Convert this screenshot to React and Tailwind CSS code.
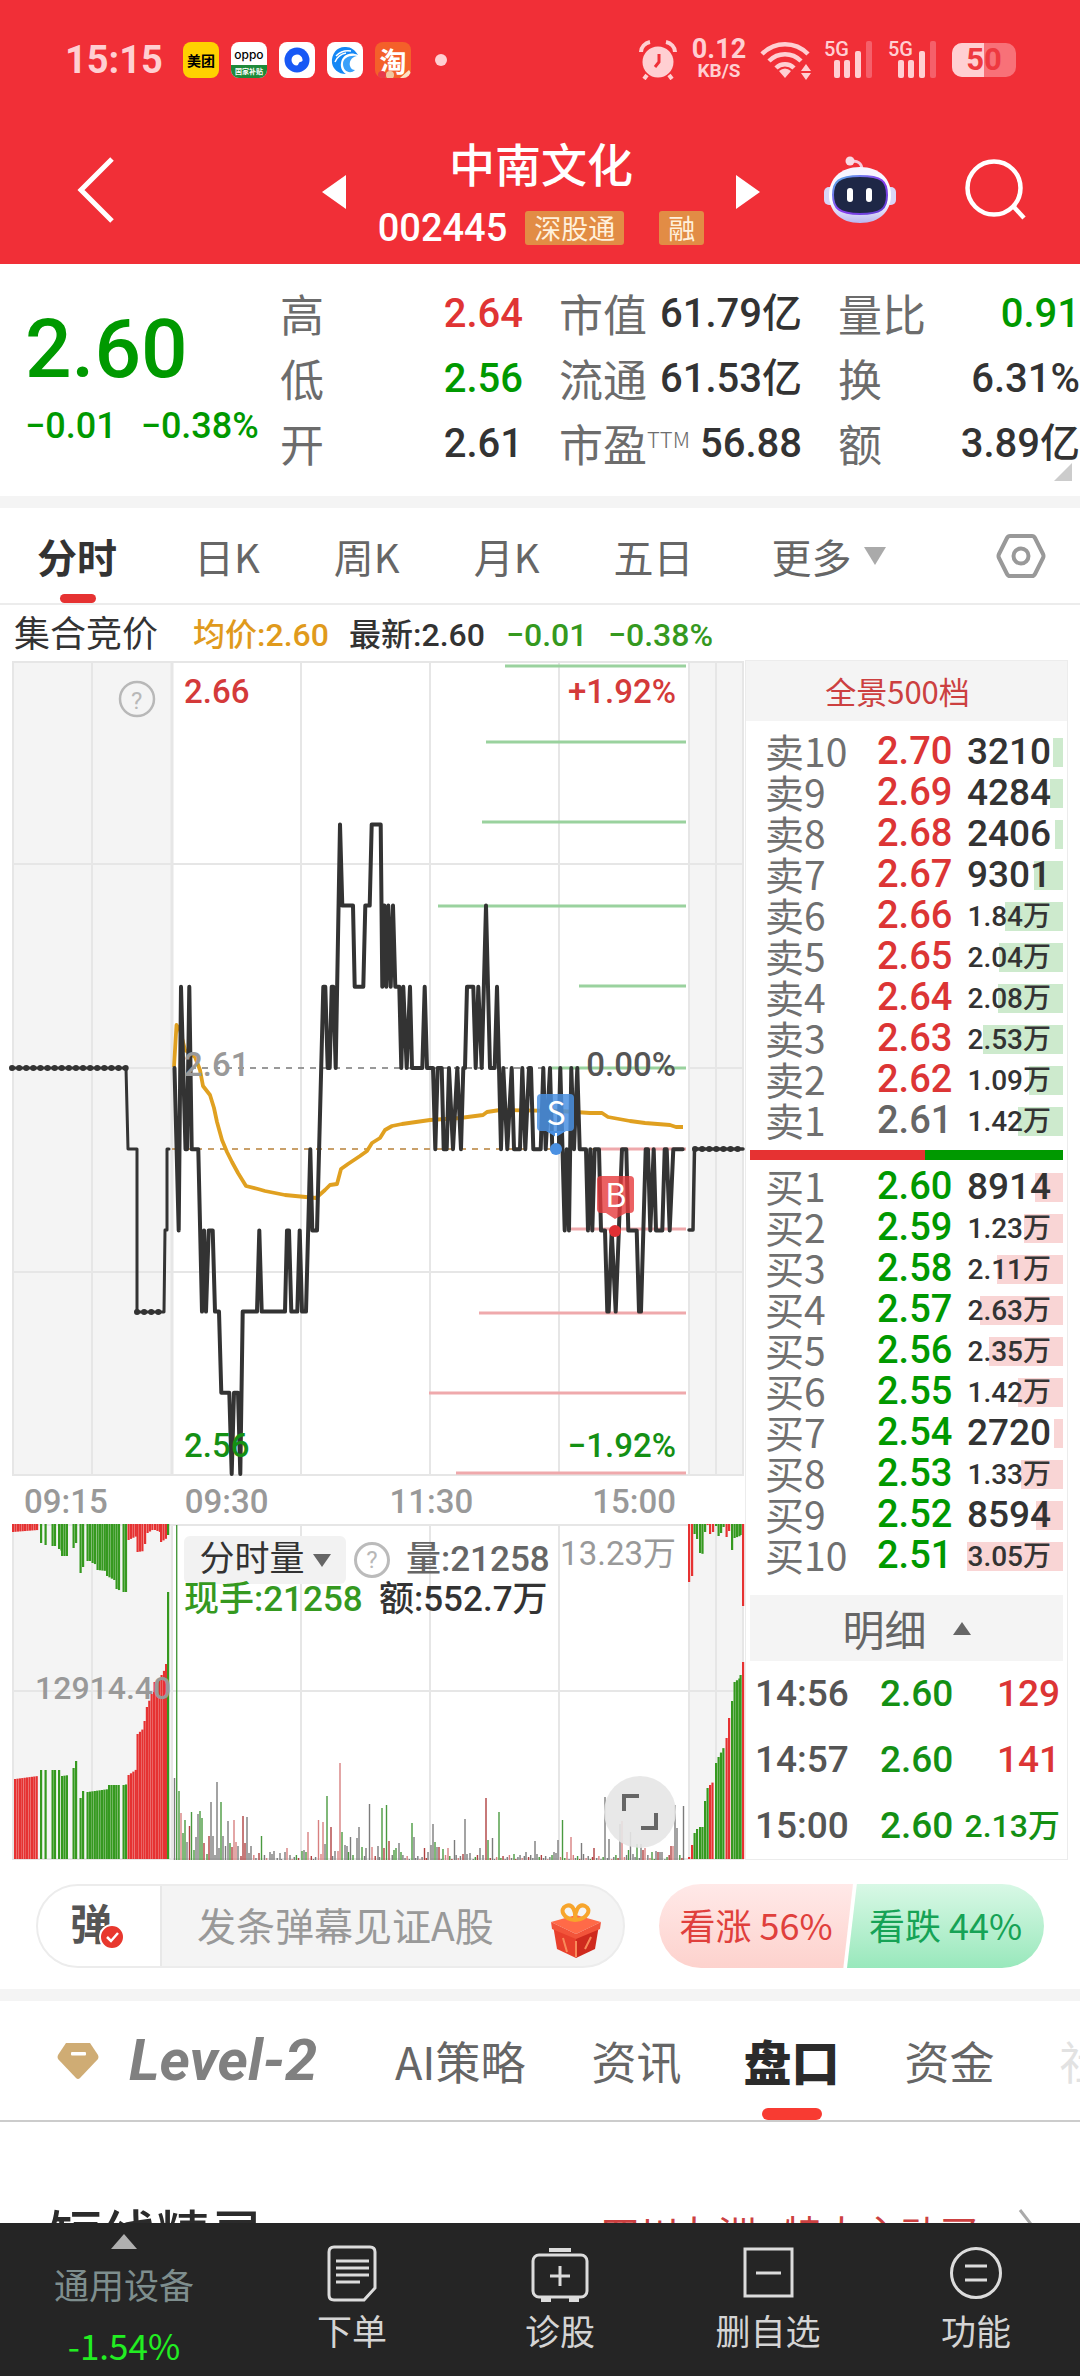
import React from "react";

const SELLS = [
  ["卖10", "2.70", "3210", 3210],
  ["卖9", "2.69", "4284", 4284],
  ["卖8", "2.68", "2406", 2406],
  ["卖7", "2.67", "9301", 9301],
  ["卖6", "2.66", "1.84万", 18400],
  ["卖5", "2.65", "2.04万", 20400],
  ["卖4", "2.64", "2.08万", 20800],
  ["卖3", "2.63", "2.53万", 25300],
  ["卖2", "2.62", "1.09万", 10900],
  ["卖1", "2.61", "1.42万", 14200],
];

const BUYS = [
  ["买1", "2.60", "8914", 8914],
  ["买2", "2.59", "1.23万", 12300],
  ["买3", "2.58", "2.11万", 21100],
  ["买4", "2.57", "2.63万", 26300],
  ["买5", "2.56", "2.35万", 23500],
  ["买6", "2.55", "1.42万", 14200],
  ["买7", "2.54", "2720", 2720],
  ["买8", "2.53", "1.33万", 13300],
  ["买9", "2.52", "8594", 8594],
  ["买10", "2.51", "3.05万", 30500],
];

const MAX_QTY = 30500;

const TRADES = [
  ["14:56", "2.60", "129", false],
  ["14:57", "2.60", "141", false],
  ["15:00", "2.60", "2.13万", true],
];

const RED = "#e63232";
const GREEN = "#35991f";

/* Price path: x position and price step relative to the previous close. */
const PRICE = [
  [174.5, 0], [178.7, -2], [181, 1], [185.5, -1], [187, -1], [189.3, 1], [191.7, -1], [198.3, -1],
  [202, -3], [204, -2], [206, -3], [208.7, -2], [212.7, -2], [215, -3], [219, -3], [221.3, -4],
  [229.3, -4], [231.7, -5], [234, -4], [238, -4], [240.3, -5], [242.7, -3], [257, -3], [259.3, -2],
  [261.7, -3], [285, -3], [287, -2], [289, -2], [291.3, -3], [297.3, -3], [299.7, -2], [302, -3],
  [306, -3], [310.3, -1], [312.3, -2], [317, -2], [323.3, 1], [325.3, 1], [327.7, 0], [329.7, 0],
  [331.7, 1], [333.3, 1], [335.7, 0], [340, 3], [342.3, 2], [353, 2], [354.7, 1], [363.3, 1],
  [365.3, 2], [369.7, 2], [371.7, 3], [380.7, 3], [382.3, 1], [384.3, 2], [386.3, 1], [388.3, 2],
  [390.7, 1], [393, 2], [395.3, 1], [399.3, 1], [401.3, 0], [403.3, 1], [406.7, 0], [410, 1],
  [412, 0], [422.3, 0], [424.7, 1], [427, 0], [433, 0], [435.3, -1], [437.7, 0], [441.7, 0],
  [443.7, -1], [446.7, -1], [449, 0], [453, -1], [457.3, 0], [461, -1], [463.3, 0], [465, 0],
  [467, 1], [473.3, 1], [475.7, 0], [478.3, 1], [481.7, 0], [486, 2], [490, 0], [494.7, 0],
  [497, 1], [499, 0], [501, -1], [503.3, 0], [507.3, -1], [511.7, 0], [514, -1], [520, -1],
  [522.3, 0], [525.3, -1], [529, 0], [531, 0], [533.3, -1], [540.7, -1], [543.3, 0], [545.7, -1],
  [550, 0], [552.3, -1], [558.3, -1], [560.3, 0], [564.7, -2], [566.7, -1], [569, -2], [571.3, 0],
  [574, -1], [577.3, 0], [579.7, -1], [586, -1], [588, -2], [590.3, -1], [592.3, -2], [594.7, -1],
  [599, -1], [601, -2], [605, -2], [607.3, -3], [608.7, -3], [611.7, -2], [615.7, -3], [622, -1],
  [626.3, -1], [628.3, -2], [636.7, -2], [639, -3], [641, -3], [645.7, -1], [648, -1], [650.3, -2],
  [653.7, -1], [656, -2], [662.3, -2], [664.7, -1], [666.7, -1], [669.7, -2], [673.3, -1], [682.7, -1],
];

const AVERAGE =
  "174,1067 176.5,1025 180,1030 185,1050 195,1057 200,1070 203,1086 210,1095 214,1108 217,1122 222,1140 227,1152 232,1162 238,1173 246,1186 258,1189 265,1191 285,1195 316,1198 325,1190 330,1185 337,1184 341,1169 348,1164 360,1156 367,1151 372,1143 380,1138 385,1130 392,1126 402,1124 430,1120 460,1118 483,1115 487,1112 500,1110 560,1111 590,1113 602,1113 608,1117 630,1121 645,1123 670,1125 676,1127 683,1127";

const pricePoints = PRICE.map(([x, l]) => `${x},${(1068 - 81.2 * l).toFixed(1)}`).join(" ");

const SELL_WALLS = [[505, 666], [486, 742], [482, 822], [438, 906], [579, 986], [552, 1068]];
const BUY_WALLS = [[600, 1149], [570, 1229], [479, 1313], [429, 1393], [456, 1473]];

/* Auction bars: start x, end x, start height, end height, colour. */
const TOP_BARS = [
  [12, 37, 8, 6, RED], [40, 41, 19, 19, GREEN], [44.5, 46, 21, 21, GREEN], [51.5, 56, 22, 22, GREEN],
  [58, 61, 25, 27, GREEN], [61, 68, 32, 32, GREEN], [72.5, 74, 24, 24, GREEN], [75, 76, 19, 19, GREEN],
  [79.5, 81, 49, 49, GREEN], [82, 83, 43, 43, GREEN], [86.5, 91, 37, 37, GREEN], [91.5, 96, 39, 41, GREEN],
  [96.5, 105, 46, 47, GREEN], [106, 115, 52, 57, GREEN], [115.5, 120, 65, 67, GREEN], [122.5, 127, 68, 68, GREEN],
  [127.5, 136, 16, 12, RED], [136.5, 143, 28, 27, RED], [144, 146, 20, 20, RED], [146.5, 153, 9, 5, RED],
  [154, 159, 6, 8, RED], [160, 166, 18, 14, RED], [167, 168, 11, 11, GREEN],
  [688, 690, 58, 58, RED], [691, 692, 52, 52, RED], [693.5, 694, 10, 10, GREEN], [696, 698, 15, 15, GREEN],
  [699, 702, 29, 30, GREEN], [704, 705, 8, 8, GREEN], [706.5, 707, 1, 1, RED], [709, 710, 10, 10, RED],
  [712, 713, 8, 8, RED], [715, 716, 2, 2, GREEN], [717.5, 718, 12, 12, GREEN], [720, 721, 9, 9, GREEN],
  [722.5, 723, 3, 3, GREEN], [725.5, 726, 13, 13, RED], [728, 729, 7, 7, RED], [731, 732, 26, 26, GREEN],
  [733.5, 739, 14, 12, GREEN], [739.5, 740, 11, 11, GREEN], [742, 743, 82, 82, RED],
];

const BOTTOM_BARS = [
  [14, 37, 80, 83, RED], [40, 41, 89, 89, GREEN], [44.5, 46, 89, 89, GREEN], [51.5, 56, 89, 89, GREEN],
  [58, 60, 89, 89, GREEN], [61, 68, 83, 84, GREEN], [72.5, 74, 91, 91, GREEN], [75, 76, 98, 98, GREEN],
  [79.5, 80, 61, 61, GREEN], [82, 83, 68, 68, GREEN], [86.5, 108, 67, 70, GREEN], [108, 120, 74, 74, GREEN],
  [122.5, 127, 74, 75, GREEN], [127.5, 136, 84, 90, RED], [136.5, 143, 125, 131, RED], [143.5, 145, 138, 138, RED],
  [145.8, 150, 152, 163, RED], [150.5, 153, 165, 167, RED], [153.5, 160, 177, 180, RED], [160.5, 164, 184, 190, RED], [165, 166, 195, 195, RED],
  [167, 168, 267, 267, GREEN],
  [688, 689, 2, 2, RED], [691, 692, 14, 14, RED], [693.5, 694, 26, 26, GREEN], [696, 698, 30, 30, GREEN],
  [699, 702, 32, 32, GREEN], [704, 705, 58, 58, GREEN], [706.5, 708, 71, 71, GREEN], [709, 713, 74, 78, RED],
  [715, 716, 96, 96, GREEN], [717.5, 724, 102, 114, GREEN], [725.5, 726, 121, 121, RED], [728, 729, 141, 141, RED],
  [731, 732, 158, 158, GREEN], [733.5, 739, 177, 181, GREEN], [739.5, 740, 184, 184, GREEN], [742, 743, 197, 197, RED],
];

function expand(groups) {
  const bars = [];
  groups.forEach(([a, b, h0, h1, color]) => {
    for (let x = a; x <= b; x += 2.4) {
      const t = b > a ? (x - a) / (b - a) : 0;
      bars.push({ x, h: h0 + (h1 - h0) * t, color });
    }
  });
  return bars;
}

/* Continuous trading volume: x, height, colour key. */
const VOLUME = [
  [174.5, 82, "k"], [176.7, 335, "g"], [179, 69, "g"], [181, 47, "p"], [183, 27, "g"], [185, 40, "g"], [187, 18, "k"],
  [189.5, 34, "r"], [191.5, 48, "g"], [194, 10, "g"], [196, 23, "k"], [198, 46, "k"], [200, 49, "g"], [202, 42, "g"],
  [204, 17, "r"], [207, 6, "g"], [209, 24, "r"], [211, 58, "k"], [213, 24, "k"], [215, 5, "k"], [217, 78, "k"], [219, 12, "k"],
  [221, 58, "g"], [223, 24, "k"], [225.5, 14, "k"], [228, 39, "k"], [230, 17, "g"], [232, 13, "r"], [234, 40, "p"],
  [236, 18, "p"], [238, 14, "k"], [241, 4, "r"], [243, 44, "r"], [245, 17, "r"], [247, 43, "k"], [249, 7, "k"], [251, 14, "k"],
  [259, 7, "r"], [261.5, 24, "g"], [270, 8, "k"], [272, 6, "k"], [274, 9, "k"], [280, 7, "k"], [285, 8, "k"], [287, 12, "p"],
  [290, 5, "k"], [302, 9, "g"], [304, 10, "k"], [306, 8, "g"], [308, 28, "p"], [318.5, 40, "p"], [321, 6, "p"],
  [323, 38, "p"], [325, 16, "k"], [327, 64, "g"], [331, 33, "r"], [335, 9, "k"], [338, 9, "p"], [340, 97, "p"],
  [342, 28, "g"], [345, 15, "k"], [347, 14, "k"], [348.5, 8, "g"], [350.5, 23, "k"], [353, 5, "g"], [357, 22, "k"], [359, 33, "k"],
  [362, 13, "g"], [366, 12, "k"], [369.5, 56, "k"], [372, 13, "p"], [378, 14, "k"], [382, 52, "g"], [384, 12, "r"],
  [386.5, 55, "g"], [389, 19, "r"], [394, 10, "g"], [396, 12, "g"], [399, 17, "k"], [401, 8, "g"], [412, 37, "g"],
  [414, 23, "k"], [424.5, 12, "r"], [428, 8, "k"], [431, 15, "k"], [433, 36, "k"], [435, 18, "g"], [437, 13, "k"],
  [439, 13, "r"], [443, 11, "g"], [448, 12, "p"], [454.5, 20, "k"], [463, 6, "r"], [465, 41, "k"], [467, 6, "k"],
  [470, 7, "k"], [480, 12, "k"], [483, 5, "k"], [486, 62, "r"], [488, 20, "g"], [492.5, 22, "k"], [499, 48, "g"],
  [514, 6, "g"], [526, 8, "k"], [535, 19, "k"], [537, 6, "k"], [554, 8, "k"], [556, 7, "k"], [558, 20, "k"],
  [562.5, 40, "g"], [567, 8, "p"], [571, 23, "p"], [581.5, 17, "k"], [583.5, 6, "k"], [594, 12, "r"], [605, 63, "k"],
  [609, 21, "k"], [620, 36, "k"], [622, 39, "p"], [628.5, 10, "g"], [630.5, 28, "k"], [633, 6, "k"], [637, 16, "g"],
  [641, 16, "k"], [643, 10, "r"], [645, 12, "p"], [652, 8, "g"], [656, 9, "k"], [658, 8, "r"], [660, 8, "k"], [662, 8, "k"],
  [671, 14, "r"], [673, 14, "p"], [675, 55, "k"], [677, 32, "k"], [683.5, 54, "k"],
];

const VOLUME_COLORS = { k: "#7c7c7c", g: "#4a9a40", r: "#b04040", p: "#d88080" };

const QUIET_VOLUME = (() => {
  const keys = ["k", "k", "r", "g", "k", "p"];
  const out = [];
  for (let i = 0; i < 240; i += 1) {
    const x = 175 + i * 2.13;
    if (!VOLUME.some(([vx]) => Math.abs(vx - x) < 1.4)) {
      out.push([x, 1 + ((i * 37) % 5), keys[(i * 17) % 6]]);
    }
  }
  return out;
})();

function SimSignal() {
  return (
    <div className="relative h-[40px] w-[52px]">
      <span className="absolute top-0 left-0 font-['Roboto',sans-serif] text-[20px] leading-[18px] font-medium">5G</span>
      <svg viewBox="0 0 52 40" className="h-full w-full" aria-hidden="true">
        <rect x="10" y="20" width="6" height="18" rx="2" fill="#ffcfd2" />
        <rect x="20" y="20" width="6" height="18" rx="2" fill="#ffcfd2" />
        <rect x="31" y="11" width="6" height="27" rx="2" fill="#ffcfd2" />
        <rect x="42" y="1" width="6" height="37" rx="2" fill="#f5606a" />
      </svg>
    </div>
  );
}

function StatusBar() {
  return (
    <div className="flex h-[120px] items-center justify-between pr-[64px] pl-[65px] text-[#ffcfd2]">
      <div className="flex items-center gap-3">
        <span className="mr-2 font-['Roboto',sans-serif] text-[38px] leading-[40px] font-bold">15:15</span>
        <span className="flex size-9 items-center justify-center rounded-lg bg-[#ffd100] font-['Noto_Sans_CJK_SC',sans-serif] text-[14px] leading-none font-bold text-black">美团</span>
        <span className="flex size-9 flex-col overflow-hidden rounded-lg bg-white text-center">
          <span className="h-[23px] font-['Inter',sans-serif] text-[12px] leading-[26px] font-medium text-black">oppo</span>
          <span className="flex-1 bg-[#1e8a3a] font-['Noto_Sans_CJK_SC',sans-serif] text-[7px] leading-[13px] font-bold text-white">国家补贴</span>
        </span>
        <svg viewBox="0 0 36 36" className="size-9" aria-hidden="true">
          <rect width="36" height="36" rx="8" fill="#fff" />
          <circle cx="18" cy="18" r="12.5" fill="#1758f5" />
          <path d="M18 12.500a5.500 5.500 0 1 0 0 11 c1.500 0 1.500-3 3-3.500 s3-.500 2.500-2.500 a5.500 5.500 0 0 0-5.500-5z" fill="#fff" />
        </svg>
        <svg viewBox="0 0 36 36" className="size-9" aria-hidden="true">
          <rect width="36" height="36" rx="8" fill="#fff" />
          <path d="M5 21C4 11 11 4 19 5c5 0 9 3 12 8-8-4-16 0-17 8-1 5 2 9 5 11C11 32 6 27 5 21Z" fill="#1487f5" />
          <path d="M16 22c0-6 6-9 14-8-6 1-8 6-7 10 1 3 3 4 5 4-5 5-12 1-12-6Z" fill="#3aa0fa" />
          <path d="M9 14c4-4 9-6 15-5M8 20c2-5 6-8 11-9" stroke="#fff" strokeWidth="1.500" fill="none" />
        </svg>
        <span className="relative flex size-9 items-center justify-center overflow-hidden rounded-lg bg-[#f4602a] font-['Noto_Sans_CJK_SC',sans-serif] text-[27px] leading-none font-bold text-white">
          淘
          <svg viewBox="0 0 36 8" className="absolute bottom-0 left-0 h-2 w-9" aria-hidden="true">
            <circle cx="7" cy="5" r="4" fill="#e63a4a" />
            <circle cx="15" cy="5" r="4" fill="#f0c8a0" />
            <path d="M25 8l9-8 2 3v5z" fill="#fbe3c8" />
          </svg>
        </span>
        <span className="ml-3 size-3 rounded-full bg-[#ffcfd2]" />
      </div>
      <div className="flex items-center gap-3">
        <svg viewBox="0 0 40 40" className="size-10" aria-hidden="true">
          <circle cx="20" cy="22" r="15.500" fill="#ffcfd2" />
          <path d="M3 12c0-5 4-9 9-10M37 12c0-5-4-9-9-10" stroke="#ffcfd2" strokeWidth="4" fill="none" />
          <path d="M9 35l-3 4M31 35l3 4" stroke="#ffcfd2" strokeWidth="4" />
          <path d="M21 14v8l-4 5" stroke="#f03038" strokeWidth="3" fill="none" />
        </svg>
        <div className="w-[58px] text-center font-['Roboto',sans-serif] font-bold">
          <div className="text-[27px] leading-[21px]">0.12</div>
          <div className="text-[19px] leading-[21px]">KB/S</div>
        </div>
        <svg viewBox="0 0 52 40" className="h-10 w-[52px]" aria-hidden="true">
          <g fill="none" stroke="#ffcfd2" strokeWidth="4.500">
            <path d="M2 14c13-13 33-13 46 0" />
            <path d="M9 21c9-9 23-9 32 0" />
            <path d="M16 28c5-5 13-5 18 0" />
          </g>
          <path d="M19 31q6-5 12 0l-6 7z" fill="#ffcfd2" />
          <path d="M41 31l5-7 5 7zM41 33l5 7 5-7z" fill="#ffcfd2" />
        </svg>
        <SimSignal />
        <SimSignal />
        <div className="relative flex h-[34px] w-[64px] items-center justify-center overflow-hidden rounded-[10px] bg-[#f87178]">
          <span className="absolute inset-y-0 left-0 w-[32px] bg-[#ffcfd2]" />
          <span className="relative font-['Roboto',sans-serif] text-[31px] leading-[34px] font-bold text-[#ee3940]">50</span>
        </div>
      </div>
    </div>
  );
}

function TitleBar() {
  return (
    <div className="flex h-[144px] items-start justify-between pr-[53px] pl-[74px]">
      <button type="button" aria-label="返回" className="mt-9 w-[184px]">
        <svg viewBox="0 0 44 68" className="h-[68px] w-[44px]" aria-hidden="true">
          <path d="M38 3L7 34l31 31" fill="none" stroke="#fff" strokeWidth="5" />
        </svg>
      </button>
      <div className="flex items-start gap-[30px]">
        <button type="button" aria-label="上一只" className="mt-[55px]">
          <svg viewBox="0 0 24 34" className="h-[34px] w-6" aria-hidden="true"><path d="M24 0v34L0 17z" fill="#fff" /></svg>
        </button>
        <div className="flex w-[330px] flex-col items-center text-white">
          <h1 className="mt-[12px] font-['Noto_Sans_CJK_SC',sans-serif] text-[46px] leading-[60px] font-medium">中南文化</h1>
          <div className="mt-[16px] flex h-[40px] items-center">
            <span className="font-['Roboto',sans-serif] text-[38px] leading-[40px] font-medium">002445</span>
            <span className="ml-[18px] rounded-[3px] bg-[#e28c45] px-[9px] font-['Noto_Sans_CJK_SC',sans-serif] text-[27px] leading-[34px] text-[#fff0dc]">深股通</span>
            <span className="ml-[35px] rounded-[3px] bg-[#e28c45] px-[9px] font-['Noto_Sans_CJK_SC',sans-serif] text-[27px] leading-[34px] text-[#fff0dc]">融</span>
          </div>
        </div>
        <button type="button" aria-label="下一只" className="mt-[55px]">
          <svg viewBox="0 0 24 34" className="h-[34px] w-6" aria-hidden="true"><path d="M0 0v34l24-17z" fill="#fff" /></svg>
        </button>
      </div>
      <div className="mt-9 flex w-[203px] items-start justify-end gap-[67px]">
        <button type="button" aria-label="智能助手">
          <svg viewBox="0 0 72 68" className="h-[68px] w-[72px]" aria-hidden="true">
            <defs>
              <linearGradient id="shell" x1="0" y1="0" x2="0" y2="1">
                <stop offset="0" stopColor="#f6f3ff" />
                <stop offset="0.6" stopColor="#ffffff" />
                <stop offset="1" stopColor="#b9b6f0" />
              </linearGradient>
              <linearGradient id="rim" x1="0" y1="0" x2="1" y2="1">
                <stop offset="0" stopColor="#58b8e8" />
                <stop offset="0.5" stopColor="#8a3ff0" />
                <stop offset="1" stopColor="#5a3fd0" />
              </linearGradient>
            </defs>
            <path d="M27 6c6-2 11 1 11 8" fill="none" stroke="#f7c8d8" strokeWidth="3" />
            <circle cx="26" cy="5" r="4.500" fill="#f8dbe5" />
            <rect x="0" y="31" width="12" height="18" rx="5" fill="#d9d6f8" />
            <rect x="60" y="31" width="12" height="18" rx="5" fill="#d9d6f8" />
            <path d="M36 11c20 0 31 12 31 28S56 67 36 67 5 55 5 39 16 11 36 11Z" fill="url(#shell)" />
            <path d="M36 20c22 0 27 5 27 19s-6 19-27 19S9 52 9 39s5-19 27-19Z" fill="#1e2746" stroke="url(#rim)" strokeWidth="2" />
            <rect x="23" y="32" width="6" height="14" rx="3" fill="#fff" />
            <rect x="42" y="32" width="6" height="14" rx="3" fill="#fff" />
          </svg>
        </button>
        <button type="button" aria-label="搜索" className="mt-[2px]">
          <svg viewBox="0 0 64 64" className="size-16" aria-hidden="true">
            <circle cx="31" cy="30" r="26.500" fill="none" stroke="#fff" strokeWidth="4.500" />
            <path d="M50 48l11 12" stroke="#fff" strokeWidth="4.500" />
          </svg>
        </button>
      </div>
    </div>
  );
}

function Stat({ label, value, tone, note }) {
  return (
    <div className="flex h-[65px] items-center justify-between whitespace-nowrap">
      <dt className="font-['Noto_Sans_CJK_SC',sans-serif] text-[44px] leading-[61px] text-[#6c6c6c]">
        {label}
        {note ? <sup className="relative -top-[14px] align-baseline text-[22px] leading-none font-light">{note}</sup> : null}
      </dt>
      <dd className={`font-['Roboto','Noto_Sans_CJK_SC',sans-serif] text-[40px] leading-[65px] font-medium ${tone}`}>{value}</dd>
    </div>
  );
}

function Quote() {
  const dark = "text-[#333]";
  return (
    <section className="relative flex h-[232px] pl-[25px]">
      <div className="w-[255px] font-['Roboto',sans-serif] font-medium whitespace-nowrap text-[#009900]">
        <div className="mt-[41px] text-[82px] leading-[88px]">2.60</div>
        <div className="mt-[12px] flex gap-[24px] text-[36px] leading-[42px]">
          <span>−0.01</span>
          <span>−0.38%</span>
        </div>
      </div>
      <dl className="mt-[17px] w-[243px]">
        <Stat label="高" value="2.64" tone="text-[#e03434]" />
        <Stat label="低" value="2.56" tone="text-[#009900]" />
        <Stat label="开" value="2.61" tone={dark} />
      </dl>
      <dl className="mt-[17px] ml-[36px] w-[243px]">
        <Stat label="市值" value="61.79亿" tone={dark} />
        <Stat label="流通" value="61.53亿" tone={dark} />
        <Stat label="市盈" note="TTM" value="56.88" tone={dark} />
      </dl>
      <dl className="mt-[17px] ml-[36px] flex-1">
        <Stat label="量比" value="0.91" tone="text-[#009900]" />
        <Stat label="换" value="6.31%" tone={dark} />
        <Stat label="额" value="3.89亿" tone={dark} />
      </dl>
      <svg viewBox="0 0 18 18" className="absolute right-2 bottom-[15px] size-[18px]" aria-hidden="true">
        <path d="M18 0v18H0z" fill="#ccc" />
      </svg>
    </section>
  );
}

function PeriodTabs() {
  return (
    <nav className="flex h-[97px] items-center border-b-2 border-[#ececec] pr-[34px] pl-[37px] font-['Noto_Sans_CJK_SC',sans-serif] text-[40px] leading-[94px] text-[#666]">
      <button type="button" className="relative font-bold text-[#333]">
        分时
        <span className="absolute bottom-0 left-[23px] h-[9px] w-9 rounded-full bg-[#e63232]" />
      </button>
      <button type="button" className="ml-[77px]">日K</button>
      <button type="button" className="ml-[74px]">周K</button>
      <button type="button" className="ml-[74px]">月K</button>
      <button type="button" className="ml-[74px]">五日</button>
      <button type="button" className="ml-[78px] flex items-center gap-[12px]">
        更多
        <svg viewBox="0 0 22 18" className="h-[18px] w-[22px]" aria-hidden="true"><path d="M0 0h22L11 18z" fill="#aaa" /></svg>
      </button>
      <button type="button" aria-label="设置" className="ml-auto">
        <svg viewBox="0 0 50 46" className="h-[46px] w-[50px]" aria-hidden="true">
          <path d="M14 3h22q2 0 3 2l8 16q1 2 0 4l-8 16q-1 2-3 2H14q-2 0-3-2L3 25q-1-2 0-4l8-16q1-2 3-2Z" fill="none" stroke="#999" strokeWidth="4" />
          <circle cx="25" cy="23" r="7.500" fill="none" stroke="#999" strokeWidth="4" />
        </svg>
      </button>
    </nav>
  );
}

function InfoLine() {
  return (
    <div className="flex h-[52px] items-center pt-[8px] pl-[14px] font-['Roboto','Noto_Sans_CJK_SC',sans-serif] text-[32px] leading-[42px] font-medium whitespace-nowrap">
      <span className="w-[179px] text-[36px] font-normal text-[#333]">集合竞价</span>
      <span className="w-[156px] text-[#e09a1c]">均价:2.60</span>
      <span className="w-[157px] text-[#333]">最新:2.60</span>
      <span className="w-[102px] text-[#35991f]">−0.01</span>
      <span className="text-[#35991f]">−0.38%</span>
    </div>
  );
}

function PriceChart() {
  return (
    <div className="relative font-['Roboto',sans-serif] text-[33px] leading-[36px] font-medium">
      <svg viewBox="0 657 745 820" className="block w-full" role="img" aria-label="分时走势图">
        <rect x="12" y="661" width="160" height="815" fill="#f4f4f4" />
        <rect x="689" y="661" width="55" height="815" fill="#f4f4f4" />
        <g stroke="#e6e6e6" strokeWidth="2">
          <path d="M13 661V1476M92 661V1476M301 661V1476M430 661V1476M559 661V1476M689 661V1476M716 661V1476M743 661V1476" />
          <path d="M172 661V1476" strokeWidth="3" />
          <path d="M12 662H744M12 864H744M12 1272H744M12 1475H744M12 1068H172M689 1068H744" />
        </g>
        <path d="M190 1068H683" stroke="#999" strokeWidth="2" strokeDasharray="6 6" />
        <path d="M172 1149H683" stroke="#c9a06a" strokeWidth="2" strokeDasharray="6 6" />
        <g stroke="#9ad29e" strokeWidth="3">
          {SELL_WALLS.map(([x, y]) => <path key={y} d={`M${x} ${y}H686`} />)}
        </g>
        <g stroke="#efa9ac" strokeWidth="3">
          {BUY_WALLS.map(([x, y]) => <path key={y} d={`M${x} ${y}H686`} />)}
        </g>
        <polyline points={AVERAGE} fill="none" stroke="#e0a020" strokeWidth="3.800" strokeLinejoin="round" />
        <g fill="none" stroke="#333" strokeLinejoin="round" strokeLinecap="round">
          <polyline points="12,1068 126,1068 128,1149 137,1149 137,1312 164,1312 165,1230 167,1230 167,1149 169,1149" strokeWidth="3" />
          <path d="M12 1068H126M137 1312H164M695 1149H742" strokeWidth="6" strokeDasharray="0.100 7" />
          <polyline points={pricePoints} strokeWidth="4" />
          <polyline points="689,1230 693,1230 694.500,1149 743,1149" strokeWidth="3.500" />
        </g>
        <g>
          <rect x="537" y="1094" width="37" height="37" rx="4" fill="#4a90e2" fillOpacity="0.850" />
          <path d="M546 1131h20l-10 6z" fill="#4a90e2" />
          <path d="M556 1133v12" stroke="#fff" strokeWidth="2" />
          <circle cx="556" cy="1149" r="6" fill="#4a90e2" />
          <rect x="597" y="1176" width="37" height="37" rx="4" fill="#e63a3c" fillOpacity="0.800" />
          <path d="M606 1213h20l-11 6z" fill="#e63a3c" fillOpacity="0.800" />
          <circle cx="615" cy="1231" r="6" fill="#e03034" />
        </g>
        <circle cx="137" cy="699" r="17" fill="none" stroke="#b8b8b8" strokeWidth="2.500" />
      </svg>
      <span className="absolute top-[4.100%] left-[17%] w-[20px] text-center text-[24px] leading-[20px] font-normal text-[#b8b8b8]">?</span>
      <span className="absolute top-[17px] left-[184px] text-[#d43a3a]">2.66</span>
      <span className="absolute top-[17px] right-[69px] text-[#d43a3a]">+1.92%</span>
      <span className="absolute top-[47.600%] left-[184px] text-[#999]">2.61</span>
      <span className="absolute top-[47.600%] right-[69px] text-[#555]">0.00%</span>
      <span className="absolute bottom-[13px] left-[184px] text-[#149014]">2.56</span>
      <span className="absolute right-[69px] bottom-[13px] text-[#149014]">−1.92%</span>
      <span className="absolute top-[53.200%] left-[72.100%] w-[38px] text-center font-['Noto_Sans_CJK_SC',sans-serif] text-[32px] leading-[36px] font-normal text-white">S</span>
      <span className="absolute top-[63.200%] left-[80.100%] w-[38px] text-center font-['Noto_Sans_CJK_SC',sans-serif] text-[32px] leading-[36px] font-normal text-white">B</span>
    </div>
  );
}

function VolumeChart() {
  return (
    <div className="relative font-['Roboto','Noto_Sans_CJK_SC',sans-serif] text-[35px] leading-[40px]">
      <svg viewBox="0 1523 745 338" className="block w-full" role="img" aria-label="分时成交量">
        <rect x="12" y="1524" width="160" height="335" fill="#f4f4f4" />
        <rect x="689" y="1524" width="55" height="335" fill="#f4f4f4" />
        <path d="M13 1524V1859M92 1524V1859M172 1524V1859M301 1524V1859M430 1524V1859M559 1524V1859M689 1524V1859M716 1524V1859M743 1524V1859M12 1525H744M12 1691H744M12 1859H744" stroke="#e6e6e6" strokeWidth="2" />
        {expand(TOP_BARS).map((b, i) => <rect key={i} x={b.x} y="1524" width="2.200" height={b.h} fill={b.color} />)}
        {expand(BOTTOM_BARS).map((b, i) => <rect key={i} x={b.x} y={1859 - b.h} width="2.200" height={b.h} fill={b.color} />)}
        {[...VOLUME, ...QUIET_VOLUME].map(([x, h, c], i) => (
          <rect key={i} x={x - 0.7} y={1860 - h} width="1.400" height={h} fill={VOLUME_COLORS[c]} />
        ))}
      </svg>
      <button type="button" className="absolute top-[13px] left-[184px] flex h-12 w-[162px] items-center justify-center gap-2 rounded-md bg-[#f2f2f2] text-[#333]">
        分时量
        <svg viewBox="0 0 18 13" className="h-[13px] w-[18px]" aria-hidden="true"><path d="M0 0h18L9 13z" fill="#666" /></svg>
      </button>
      <button type="button" aria-label="说明" className="absolute top-[19px] left-[354px] size-9 rounded-full border-[3px] border-[#bbb] text-[24px] leading-[30px] text-[#b8b8b8]">?</button>
      <span className="absolute top-[17px] left-[406px] font-medium text-[#666]">量:21258</span>
      <span className="absolute top-[11px] right-[69px] text-[33px] text-[#999]">13.23万</span>
      <span className="absolute top-[57px] left-[184px] font-medium text-[#35991f]">现手:21258</span>
      <span className="absolute top-[57px] left-[379px] font-medium text-[#333]">额:552.7万</span>
      <span className="absolute top-[145px] left-[35px] text-[32px] font-medium text-[#999]">12914.40</span>
      <button type="button" aria-label="全屏" className="absolute right-[69px] bottom-[13px] flex size-[72px] items-center justify-center rounded-full bg-[#e6e6e6]/90">
        <svg viewBox="0 0 38 38" className="size-[38px]" aria-hidden="true">
          <path d="M3 18V3h15M35 20v15H20" fill="none" stroke="#666" strokeWidth="4" />
        </svg>
      </button>
    </div>
  );
}

function BookTable({ rows, side }) {
  const sell = side === "sell";
  return (
    <table className="w-full table-fixed border-collapse whitespace-nowrap">
      <tbody>
        {rows.map(([label, price, qty, amount]) => (
          <tr key={label} className="h-[41px] leading-[41px]">
            <th scope="row" className="w-[127px] p-0 pl-[15px] text-left align-top font-['Noto_Sans_CJK_SC',sans-serif] text-[39px] leading-[38px] font-normal text-[#707070]">{label}</th>
            <td className={`w-[90px] p-0 font-['Roboto',sans-serif] text-[38px] font-medium ${price === "2.61" ? "text-[#666]" : sell ? "text-[#dc3535]" : "text-[#009900]"}`}>{price}</td>
            <td className="p-0">
              <div className="relative h-[41px]">
                <span
                  className={`absolute top-[7px] right-0 h-[29px] ${sell ? "bg-[#cdeacd]" : "bg-[#f9d5d5]"}`}
                  style={{ width: `${(amount / MAX_QTY) * 100}%` }}
                />
                <span className={`absolute inset-y-0 right-[12px] font-['Roboto','Noto_Sans_CJK_SC',sans-serif] font-medium text-[#333] ${amount < 10000 ? "text-[37px]" : "text-[28px] leading-[44px]"}`}>{qty}</span>
              </div>
            </td>
          </tr>
        ))}
      </tbody>
    </table>
  );
}

function OrderBook() {
  return (
    <aside className="mt-[3px] mr-[12px] w-[323px] border border-[#ececec]">
      <button type="button" className="block h-[60px] w-full bg-[#f4f4f4] pr-[18px] font-['Noto_Sans_CJK_SC',sans-serif] text-[31px] leading-[56px] text-[#cc4040]">全景500档</button>
      <div className="px-[4px] pt-[10px]">
        <BookTable rows={SELLS} side="sell" />
        <div className="mt-[9px] mb-[6px] flex h-[10px]">
          <span className="w-[56%] bg-[#e63232]" />
          <span className="flex-1 bg-[#009900]" />
        </div>
        <BookTable rows={BUYS} side="buy" />
        <button type="button" className="mt-[19px] flex h-[66px] w-full items-center justify-center gap-[26px] bg-[#f4f4f4] font-['Noto_Sans_CJK_SC',sans-serif] text-[42px] leading-[66px] text-[#666]">
          明细
          <svg viewBox="0 0 18 13" className="h-[13px] w-[18px]" aria-hidden="true"><path d="M0 13h18L9 0z" fill="#666" /></svg>
        </button>
        <table className="w-full table-fixed border-collapse font-['Roboto','Noto_Sans_CJK_SC',sans-serif] text-[37px] leading-[60px] font-medium whitespace-nowrap">
          <tbody>
            {TRADES.map(([time, price, qty, down]) => (
              <tr key={time} className="h-[66px]">
                <td className="w-[130px] p-0 pl-[5px] text-[#555]">{time}</td>
                <td className="w-[80px] p-0 text-[#149014]">{price}</td>
                <td className={`p-0 pr-[3px] text-right ${down ? "text-[32px] text-[#149014]" : "text-[#dc3535]"}`}>{qty}</td>
              </tr>
            ))}
          </tbody>
        </table>
      </div>
    </aside>
  );
}

function Charts() {
  return (
    <section className="flex items-start">
      <div className="min-w-0 flex-1">
        <PriceChart />
        <div className="flex h-[46px] items-center pt-[4px] font-['Roboto',sans-serif] text-[33px] leading-[42px] font-medium text-[#999]">
          <span className="ml-[24px]">09:15</span>
          <span className="ml-[77px]">09:30</span>
          <span className="ml-[121px]">11:30</span>
          <span className="mr-[69px] ml-auto">15:00</span>
        </div>
        <VolumeChart />
      </div>
      <OrderBook />
    </section>
  );
}

function Danmu() {
  return (
    <section className="flex h-[128px] items-start justify-between pt-[23px] pr-[36px] pl-[36px] font-['Noto_Sans_CJK_SC',sans-serif]">
      <div className="flex h-[84px] w-[589px] overflow-hidden rounded-full border-2 border-[#ececec] bg-[#f4f4f4]">
        <button type="button" className="relative w-[124px] border-r-2 border-[#e8e8e8] bg-white pb-[8px] pl-[32px] text-left text-[42px] leading-[68px] font-bold text-[#555]">
          弹
          <svg viewBox="0 0 26 26" className="absolute top-[38px] left-[61px] size-[26px]" aria-hidden="true">
            <circle cx="13" cy="13" r="12" fill="#e8382e" stroke="#fff" strokeWidth="2" />
            <path d="M8 13l4 4 7-8" fill="none" stroke="#fff" strokeWidth="2.500" />
          </svg>
        </button>
        <input aria-label="弹幕" placeholder="发条弹幕见证A股" className="min-w-0 flex-1 bg-transparent pb-[4px] pl-[35px] text-[39px] leading-[76px] placeholder:text-[#999] placeholder:opacity-100" />
        <button type="button" aria-label="礼物" className="mt-[10px] mr-[20px]">
          <svg viewBox="0 0 54 56" className="h-[56px] w-[54px]" aria-hidden="true">
            <path d="M4 22l23 10v23L8 46z" fill="#e8402c" />
            <path d="M50 22L27 32v23l19-9z" fill="#cf2a1e" />
            <path d="M2 19l25-7 25 7-25 12z" fill="#ff6a48" />
            <path d="M2 19l25 12v5L3 26zM52 19L27 31v5l24-10z" fill="#f2543a" />
            <path d="M14 35l4 14M36 46l6-12M27 38v16" stroke="#f88a5a" strokeWidth="2" />
            <path d="M26 17C14 16 10 6 17 3s10 6 9 14c0-8 3-17 10-14s3 13-10 14Z" fill="none" stroke="#f7a52c" strokeWidth="4" />
          </svg>
        </button>
      </div>
      <div className="flex h-[84px] w-[385px] overflow-hidden rounded-full text-[36px] leading-[80px] whitespace-nowrap">
        <button type="button" className="w-[194px] bg-gradient-to-b from-[#ffe9e8] to-[#fdd2cd] pb-1 text-[#e0403c] [clip-path:polygon(0_0,100%_0,95%_100%,0_100%)]">看涨 56%</button>
        <button type="button" className="-ml-[6px] flex-1 bg-gradient-to-b from-[#d8f8e6] to-[#98e8bc] pb-1 text-[#16a356] [clip-path:polygon(5%_0,100%_0,100%_100%,0_100%)]">看跌 44%</button>
      </div>
    </section>
  );
}

function SectionTabs() {
  return (
    <nav className="flex h-[121px] items-center overflow-hidden border-b-2 border-[#ccc] pl-[57px] font-['Noto_Sans_CJK_SC',sans-serif] text-[45px] leading-[119px] whitespace-nowrap text-[#666]">
      <svg viewBox="0 0 42 38" className="h-[38px] w-[42px] shrink-0" aria-hidden="true">
        <path d="M9 1h24l8 12q1 2 0 4L23 36q-2 2-4 0L1 17q-1-2 0-4z" fill="#cfac74" />
        <rect x="14" y="10" width="15" height="3.500" rx="1" fill="#fff" />
      </svg>
      <button type="button" className="ml-[30px] w-[202px] shrink-0 text-left font-['Roboto',sans-serif] text-[58px] font-bold text-[#808080] italic">Level-2</button>
      <button type="button" className="ml-[64px] shrink-0">AI策略</button>
      <button type="button" className="ml-[66px] shrink-0">资讯</button>
      <button type="button" className="relative ml-[62px] shrink-0 text-[48px] font-black text-[#2b2b2b]">
        盘口
        <span className="absolute bottom-0 left-[18px] h-3 w-[60px] rounded-full bg-[#f83b32]" />
      </button>
      <button type="button" className="ml-[65px] shrink-0">资金</button>
      <button type="button" className="ml-[65px] shrink-0 text-[#e2e2e2]">社区</button>
    </nav>
  );
}

function ShortLine() {
  return (
    <section className="flex h-[101px] items-start justify-between overflow-hidden pr-[42px] pl-[48px] font-['Noto_Sans_CJK_SC',sans-serif] whitespace-nowrap">
      <h2 className="mt-[81px] text-[54px] leading-[60px] font-medium text-[#2b2b2b]">短线精灵</h2>
      <a href="#short" className="mt-[86px] flex gap-[40px] text-[39px] leading-[48px] text-[#cc4040]">
        <span>四川九洲&nbsp;&nbsp; 特大主动买</span>
        <svg viewBox="0 0 20 40" className="h-10 w-5" aria-hidden="true"><path d="M2 2l14 18L2 38" fill="none" stroke="#aaa" strokeWidth="3" /></svg>
      </a>
    </section>
  );
}

function NavItem({ label, children }) {
  return (
    <button type="button" className="flex flex-1 flex-col items-center pt-[22px]">
      <svg viewBox="0 0 58 58" className="size-[58px]" fill="none" stroke="#dcdcdc" strokeWidth="3" aria-hidden="true">{children}</svg>
      <span className="mt-[5px] leading-[44px]">{label}</span>
    </button>
  );
}

function BottomNav() {
  return (
    <nav className="mt-auto flex h-[153px] bg-[#252525] font-['Noto_Sans_CJK_SC',sans-serif] text-[35px] text-[#d4d4d4]">
      <button type="button" className="flex w-[248px] flex-col items-center pt-[11px]">
        <svg viewBox="0 0 26 15" className="h-[15px] w-[26px]" aria-hidden="true"><path d="M0 15h26L13 0z" fill="#b0b0b0" /></svg>
        <span className="mt-[13px] leading-[44px] text-[#7e8e8e]">通用设备</span>
        <span className="mt-[17px] leading-[44px] text-[#22ee22]">-1.54%</span>
      </button>
      <NavItem label="下单">
        <path d="M11 2h36q5 0 5 5v36L41 55H11q-5 0-5-5V7q0-5 5-5Z" />
        <path d="M13 16h33M13 23h33M13 30h33M13 37h24" />
      </NavItem>
      <NavItem label="诊股">
        <rect x="2" y="10" width="54" height="42" rx="6" />
        <path d="M18 5h22M10 55h10M38 55h10" strokeWidth="4" />
        <path d="M29 21v20M19 31h20" />
      </NavItem>
      <NavItem label="删自选">
        <rect x="6" y="4" width="47" height="47" />
        <path d="M17 28h25" />
      </NavItem>
      <NavItem label="功能">
        <circle cx="29" cy="28" r="24.500" />
        <path d="M18 21h22M18 35h22" />
      </NavItem>
    </nav>
  );
}

export default function App() {
  return (
    <main className="flex min-h-screen w-full flex-col overflow-hidden bg-white">
      <header className="bg-[#f12f37]">
        <StatusBar />
        <TitleBar />
      </header>
      <Quote />
      <div className="h-[12px] bg-[#f4f4f4]" />
      <PeriodTabs />
      <InfoLine />
      <Charts />
      <Danmu />
      <div className="h-[12px] bg-[#f4f4f4]" />
      <SectionTabs />
      <ShortLine />
      <BottomNav />
    </main>
  );
}
